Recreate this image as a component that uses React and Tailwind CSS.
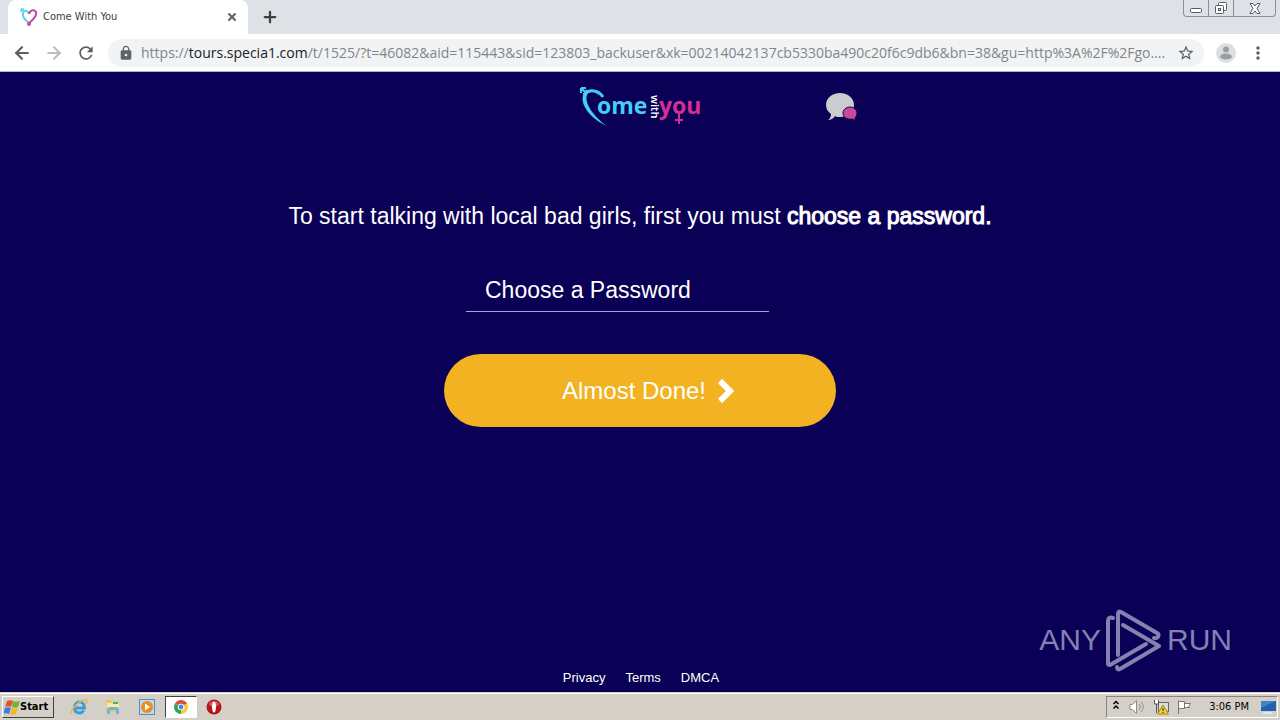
import { ArrowLeft, ArrowRight, X, Plus } from 'lucide-react';
import { MdLock, MdRefresh, MdStarBorder, MdMoreVert } from 'react-icons/md';

const url = {
  scheme: 'https://',
  host: 'tours.specia1.com',
  rest: '/t/1525/?t=46082&aid=115443&sid=123803_backuser&xk=00214042137cb5330ba490c20f6c9db6&bn=38&gu=http%3A%2F%2Fgo....',
};

const footerLinks = ['Privacy', 'Terms', 'DMCA'];

function HeartIcon() {
  return (
    <svg viewBox="0 0 18 18" className="w-[18px] h-[18px]" fill="none" strokeWidth="2">
      <path d="M9 15C5 12 2 8 3 5c1-3 5-3 6 1" stroke="#5fd0e8" />
      <path d="M1 1l3 3M1 1h3M1 1v3" stroke="#5fd0e8" strokeWidth="1.5" />
      <path d="M9 6c1-4 5-5 7-2 1 4-3 8-7 11" stroke="#c2479c" />
      <circle cx="9" cy="16" r="2" fill="#c2479c" />
    </svg>
  );
}

function WindowButtons() {
  return (
    <div className="ml-auto mr-1 flex h-[17px] w-[93px] rounded-b border border-t-0 border-[#8b8f98] divide-x divide-[#8b8f98]">
      <button aria-label="Minimize" className="flex w-[25px] items-center justify-center">
        <svg viewBox="0 0 13 12" className="w-[13px] h-3">
          <rect x="0.5" y="6.5" width="11" height="4" rx="1" fill="#fff" stroke="#555a66" />
        </svg>
      </button>
      <button aria-label="Restore" className="flex w-[25px] items-center justify-center">
        <svg viewBox="0 0 14 14" className="w-3.5 h-3.5" fill="#fff" stroke="#555a66">
          <rect x="4.5" y="1.5" width="8" height="8" rx="1" />
          <rect x="1.5" y="4.5" width="8" height="8" rx="1" />
          <rect x="4.5" y="7.5" width="2" height="2" />
        </svg>
      </button>
      <button aria-label="Close" className="flex flex-1 items-center justify-center">
        <svg viewBox="0 0 12 11" className="w-3 h-[11px]" fill="#fff" stroke="#555a66">
          <path d="M1 .5h3l2 2.5 2-2.5h3L8 5.5l3 5H8L6 8l-2 2.5H1l3-5z" />
        </svg>
      </button>
    </div>
  );
}

function TabStrip() {
  return (
    <div className="flex h-[34px] items-start bg-[#dee1e6] pl-2">
      <div className="flex h-[34px] w-60 items-center rounded-t-lg bg-white pl-3 pr-2.5">
        <HeartIcon />
        <span className="ml-[5px] flex-1 text-[11px] text-[#3c4043] font-['DejaVu_Sans_Condensed','DejaVu_Sans',sans-serif]">
          Come With You
        </span>
        <button aria-label="Close tab">
          <X className="w-3 h-3 text-[#5f6368]" strokeWidth={4} />
        </button>
      </div>
      <button aria-label="New tab" className="flex h-[34px] w-11 items-center justify-center">
        <Plus className="w-[18px] h-[18px] text-[#3c4043]" strokeWidth={3} />
      </button>
      <WindowButtons />
    </div>
  );
}

function Toolbar() {
  return (
    <div className="flex h-[38px] items-center border-b border-[#b5b1d0] bg-white pl-3">
      <button aria-label="Back"><ArrowLeft className="w-5 h-5 text-[#5a5d61]" strokeWidth={2.5} /></button>
      <button aria-label="Forward" className="ml-3"><ArrowRight className="w-5 h-5 text-[#bbbdc0]" strokeWidth={2.5} /></button>
      <button aria-label="Reload" className="ml-3"><MdRefresh className="w-5 h-5 text-[#5a5d61]" /></button>
      <div className="ml-3 flex h-7 min-w-0 flex-1 items-center rounded-full bg-[#f1f3f4] pl-2.5 pr-[9px]">
        <MdLock className="w-4 h-4 shrink-0 text-[#5f6368]" />
        <span className="ml-[7px] flex-1 whitespace-nowrap text-sm text-[#80868b] font-['Open_Sans','Noto_Sans',sans-serif]">
          {url.scheme}<span className="text-[#202124]">{url.host}</span>{url.rest}
        </span>
        <button aria-label="Bookmark"><MdStarBorder className="w-[18px] h-[18px] text-[#5a5d61]" /></button>
      </div>
      <button aria-label="Profile" className="ml-3">
        <svg viewBox="0 0 20 20" className="w-5 h-5">
          <circle cx="10" cy="10" r="10" fill="#dcdee0" />
          <circle cx="10" cy="6.5" r="3" fill="#9a9da1" />
          <ellipse cx="10" cy="13.5" rx="6" ry="3" fill="#9a9da1" />
        </svg>
      </button>
      <button aria-label="Menu" className="ml-3 mr-3"><MdMoreVert className="w-5 h-5 text-[#5a5d61]" /></button>
    </div>
  );
}

function Logo() {
  return (
    <svg viewBox="0 0 122 42" className="h-[42px] w-[122px]" aria-label="Come with you">
      <path d="M2 2h5M2 2v5M2 2l6 6M4 8l4-4" fill="none" stroke="#45cdf5" strokeWidth="2" />
      <path d="M20 10C17 5 10 4 8 9c-3 8 7 22 20 31C12 33 1 19 4 9 7 2 17 2 20 10z" fill="#45cdf5" />
      <path d="M6 8C10 3 20 4 24 11" fill="none" stroke="#45cdf5" strokeWidth="3" />
      <text x="18" y="28" fontSize="23" fontWeight="700" fill="#45cdf5" fontFamily="Open Sans, sans-serif">ome</text>
      <text transform="translate(72 9) rotate(90)" fontSize="11" fontWeight="600" fill="#fff" fontFamily="Open Sans, sans-serif">with</text>
      <text x="80" y="28" fontSize="23" fontWeight="700" fill="#d42f94" fontFamily="Open Sans, sans-serif">you</text>
      <path d="M100 28v10M96 34h8" stroke="#d42f94" strokeWidth="2" />
    </svg>
  );
}

function ChatIcon() {
  return (
    <svg viewBox="0 0 32 28" className="h-7 w-8">
      <path d="M14 0c8 0 14 5 14 12s-6 12-14 12c-2 0-4 0-5-1-1 2-4 4-7 4 2-1 3-4 3-6-3-2-5-5-5-9C0 5 6 0 14 0z" fill="#c9cdcf" />
      <path d="M24 14c4 0 7 3 7 6 0 2-1 4-2 5 0 1 1 2 1 2-2 0-3-1-4-1-5 1-9-2-9-6 0-3 3-6 7-6z" fill="#c9479c" stroke="#0a0055" />
    </svg>
  );
}

function Watermark() {
  return (
    <div className="absolute bottom-5 right-12 flex items-center gap-[5px] text-[30px] leading-[64px] text-[#8581b1] font-['Liberation_Sans',Arial,sans-serif]">
      <span>ANY</span>
      <svg viewBox="0 0 56 64" className="h-16 w-14" fill="none" stroke="#8581b1" strokeWidth="4" strokeLinejoin="round" strokeLinecap="round">
        <path d="M7 10c-3-1-5 0-5 3v43c0 1 1 1 2 1l36-21" />
        <path d="M12 47V6c0-2 1-3 3-2l36 21c3 2 1 6-3 5" />
        <path d="M17 17l36 21-39 23c-2 1-3 0-3-2" />
      </svg>
      <span>RUN</span>
    </div>
  );
}

function Landing() {
  return (
    <main className="relative flex flex-1 flex-col items-center bg-[#0a0055] text-white font-['Liberation_Sans',Arial,sans-serif]">
      <header className="grid w-full max-w-[606px] grid-cols-3 items-center justify-items-center pt-3.5">
        <div className="col-start-2"><Logo /></div>
        <ChatIcon />
      </header>
      <h1 className="mt-[72px] text-center text-[23px] leading-8">
        To start talking with local bad girls, first you must{' '}
        <strong className="font-normal [-webkit-text-stroke:1px_white]">choose a password.</strong>
      </h1>
      <form className="mt-[38px] flex w-full max-w-[392px] flex-col" onSubmit={(e) => e.preventDefault()}>
        <input
          type="password"
          aria-label="Choose a Password"
          placeholder="Choose a Password"
          className="ml-[22px] mr-[67px] h-[42px] border-b border-[#a9a4d8] bg-transparent pl-[19px] text-[23px] outline-none placeholder:text-white"
        />
        <button className="mt-[42px] flex h-[73px] items-center justify-center gap-3 rounded-full bg-[#f3b221] pl-4 text-2xl">
          Almost Done!
          <svg viewBox="0 0 16 24" className="h-6 w-4" fill="none" stroke="#fff" strokeWidth="6">
            <path d="M2 2l10 10L2 22" />
          </svg>
        </button>
      </form>
      <footer className="mt-auto flex gap-5 pb-1 pl-0.5 text-[13px] leading-5">
        {footerLinks.map((name) => (
          <a key={name} href="#">{name}</a>
        ))}
      </footer>
      <Watermark />
    </main>
  );
}

function StartFlag() {
  return (
    <svg viewBox="0 0 16 16" className="h-4 w-4">
      <path d="M3 2c2-1 4-1 6 0L7 8C5 7 3 7 1 8z" fill="#e8502a" />
      <path d="M9 2c2 1 4 1 7 0l-2 6c-2 1-4 1-6 0z" fill="#6fb52c" />
      <path d="M1 9c2-1 4-1 6 0l-2 6c-2-1-4-1-6 0z" fill="#3a7ee0" />
      <path d="M8 9c2 1 4 1 6 0l-2 6c-2 1-4 1-6 0z" fill="#f5b81c" />
    </svg>
  );
}

function IeIcon() {
  return (
    <svg viewBox="0 0 18 18" className="h-[18px] w-[18px]" fill="none">
      <path d="M4.5 10h10c0-8-10-8-10 0 0 6 7 6 9.5 2.5" stroke="#3b9be0" strokeWidth="3" />
      <path d="M2 16C-1 13 10 1 16 2c2 1 0 4-1 5" stroke="#e8b93c" strokeWidth="1.5" />
    </svg>
  );
}

function FolderIcon() {
  return (
    <svg viewBox="0 0 18 18" className="h-[18px] w-[18px]">
      <path d="M2 2h5l1 2h7v10H2z" fill="#e9c75c" />
      <path d="M3 5h12v6H3z" fill="#f9e9a4" />
      <path d="M9 4h5v2H9z" fill="#5fb04a" />
      <path d="M3 16v-4c0-2 1-3 3-3h6c2 0 3 1 3 3v4h-3v-4H6v4z" fill="#6fb3e0" />
    </svg>
  );
}

function PlayerIcon() {
  return (
    <svg viewBox="0 0 18 18" className="h-[18px] w-[18px]">
      <rect x="1.5" y="1.5" width="15" height="15" fill="#b9dcf5" stroke="#4d8fca" />
      <circle cx="9" cy="9" r="6" fill="#f28a1c" />
      <path d="M7 5.5l5 3.5-5 3.5z" fill="#fff" />
    </svg>
  );
}

function ChromeIcon() {
  return (
    <svg viewBox="0 0 16 16" className="h-3.5 w-3.5">
      <path d="M8 8L1.1 4A8 8 0 0 1 14.9 4z" fill="#e04a3a" />
      <path d="M8 8l6.9-4A8 8 0 0 1 8 16z" fill="#f8cb3a" />
      <path d="M8 8v8A8 8 0 0 1 1.1 4z" fill="#2ea456" />
      <circle cx="8" cy="8" r="3.8" fill="#fff" />
      <circle cx="8" cy="8" r="2.8" fill="#4a86e8" />
    </svg>
  );
}

function OperaIcon() {
  return (
    <svg viewBox="0 0 16 16" className="h-4 w-4">
      <circle cx="8" cy="8" r="7.5" fill="#b3161b" />
      <ellipse cx="8" cy="5" rx="5" ry="3" fill="#d9545a" />
      <ellipse cx="8" cy="8" rx="2" ry="5.5" fill="#fff" />
    </svg>
  );
}

function Tray() {
  return (
    <div className="ml-auto flex h-[22px] w-[172px] items-center border border-b-white border-r-white border-l-[#87857e] border-t-[#87857e] pl-1.5">
      <svg viewBox="0 0 6 10" className="mb-1 h-2.5 w-1.5" fill="none" stroke="#000" strokeWidth="1.5">
        <path d="M.5 4L3 1.5 5.5 4M.5 8.5L3 6l2.5 2.5" />
      </svg>
      <svg viewBox="0 0 16 16" className="ml-2.5 h-4 w-4" fill="none" stroke="#8c8c8c">
        <path d="M1 5.5h2.5l4-4v13l-4-4H1z" fill="#fff" />
        <path d="M10 5c1.5 2 1.5 4 0 6M12 3c3 3 3 7 0 10" />
      </svg>
      <svg viewBox="0 0 17 16" className="ml-2 h-4 w-[17px]">
        <rect x="5.5" y="3.5" width="10" height="9" fill="#d9dde2" stroke="#666" />
        <path d="M1.5 1v4h4V1M3.5 5v9" fill="#fff" stroke="#555" />
        <path d="M10 6l5.5 9h-11z" fill="#f8d02c" stroke="#a88a12" />
        <path d="M10 9v3M10 13v1" stroke="#222" />
      </svg>
      <svg viewBox="0 0 16 16" className="ml-1.5 h-4 w-4" fill="#fff" stroke="#777">
        <path d="M2.5 15V1.5" />
        <path d="M2.5 2.5h6v7h-6zM8.5 4.5h6l-2 3 1 1h-5z" />
      </svg>
      <time className="ml-auto">3:06 PM</time>
      <svg viewBox="0 0 16 16" className="ml-[11px] mr-px h-4 w-4">
        <rect x="1" y="2" width="15" height="10" fill="#2461ae" />
        <path d="M1 2h15L1 9z" fill="#3e83cf" />
        <path d="M3 14h9" stroke="#dbeaf8" strokeWidth="2" />
      </svg>
    </div>
  );
}

function Taskbar() {
  return (
    <div className="flex h-7 items-center border-t border-[#d4d0c8] bg-[#d4d0c8] px-0.5 pt-px text-[11px] text-black shadow-[inset_0_1px_0_white] font-['DejaVu_Sans_Condensed','DejaVu_Sans',sans-serif]">
      <button className="flex h-[22px] w-[52px] items-center border border-b-[#404040] border-l-white border-r-[#404040] border-t-white pl-px font-bold">
        <StartFlag />
        Start
      </button>
      <button aria-label="Internet Explorer" className="ml-4"><IeIcon /></button>
      <button aria-label="Explorer" className="ml-4"><FolderIcon /></button>
      <button aria-label="Media Player" className="ml-4"><PlayerIcon /></button>
      <button aria-label="Chrome" className="ml-[9px] flex h-[22px] w-8 items-center justify-center border border-b-white border-l-[#404040] border-r-white border-t-[#404040] bg-white">
        <ChromeIcon />
      </button>
      <button aria-label="Opera" className="ml-[9px]"><OperaIcon /></button>
      <Tray />
    </div>
  );
}

export default function App() {
  return (
    <div className="flex min-h-screen flex-col">
      <TabStrip />
      <Toolbar />
      <Landing />
      <Taskbar />
    </div>
  );
}
